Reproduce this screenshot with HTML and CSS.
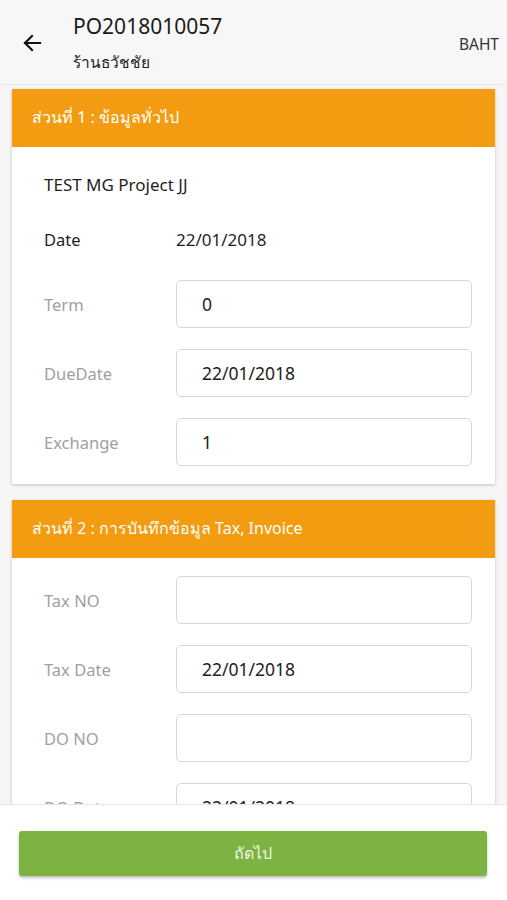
FILE: index.html
```html
<!DOCTYPE html>
<html lang="th">
<head>
<meta charset="utf-8">
<title>PO2018010057</title>
<link rel="stylesheet" href="styles.css">
</head>
<body>
<header class="topbar">
  <button class="back" aria-label="back">
    <svg width="20" height="18" viewBox="0 0 20 18"><path d="M18 9H3M10 2L3 9l7 7" fill="none" stroke="#111" stroke-width="2.2" stroke-linecap="square"/></svg>
  </button>
  <div class="titles">
    <div class="title">PO2018010057</div>
    <div class="subtitle">ร้านธวัชชัย</div>
  </div>
  <div class="currency">BAHT</div>
</header>

<main class="content">
  <section class="card">
    <div class="card-head">ส่วนที่ 1 : ข้อมูลทั่วไป</div>
    <div class="card-body first">
      <div class="project">TEST MG Project JJ</div>
      <div class="row static">
        <span class="label strong">Date</span>
        <span class="value">22/01/2018</span>
      </div>
      <div class="row">
        <span class="label">Term</span>
        <div class="input">0</div>
      </div>
      <div class="row">
        <span class="label">DueDate</span>
        <div class="input">22/01/2018</div>
      </div>
      <div class="row">
        <span class="label">Exchange</span>
        <div class="input">1</div>
      </div>
    </div>
  </section>

  <section class="card">
    <div class="card-head">ส่วนที่ 2 : การบันทึกข้อมูล Tax, Invoice</div>
    <div class="card-body">
      <div class="row">
        <span class="label">Tax NO</span>
        <div class="input"></div>
      </div>
      <div class="row">
        <span class="label">Tax Date</span>
        <div class="input">22/01/2018</div>
      </div>
      <div class="row">
        <span class="label">DO NO</span>
        <div class="input"></div>
      </div>
      <div class="row">
        <span class="label">DO Date</span>
        <div class="input">22/01/2018</div>
      </div>
      <div class="row">
        <span class="label">Invoice NO</span>
        <div class="input"></div>
      </div>
    </div>
  </section>
</main>

<footer class="bottombar">
  <button class="next">ถัดไป</button>
</footer>
</body>
</html>
```

FILE: styles.css
```css
* { box-sizing: border-box; }
html, body {
  margin: 0;
  padding: 0;
}
body {
  background: #f6f6f6;
  font-family: "Noto Sans", "DejaVu Sans", sans-serif;
  color: #222;
  height: 900px;
  overflow: hidden;
}
.topbar {
  height: 84px;
  background: #f7f7f7;
  display: flex;
  align-items: center;
  padding: 0 8px 0 22px;
  box-shadow: 0 1px 2px rgba(0,0,0,0.08);
  position: relative;
  z-index: 2;
}
.back {
  background: none;
  border: 0;
  padding: 0;
  width: 20px;
  height: 18px;
  margin-top: 2px;
  display: flex;
}
.titles {
  margin-left: 31px;
  flex: 1;
  display: flex;
  flex-direction: column;
}
.title {
  font-size: 21px;
  line-height: 26px;
  color: #1a1a1a;
  margin-top: 0;
}
.subtitle {
  font-size: 15.5px;
  line-height: 20px;
  margin-top: 13px;
  color: #222;
}
.currency {
  font-size: 15.5px;
  color: #333;
  margin-top: 3px;
}
.content {
  padding: 5px 12px 0;
  display: flex;
  flex-direction: column;
  gap: 16px;
}
.card {
  background: #fff;
  box-shadow: 0 1px 3px rgba(0,0,0,0.22);
}
.card-head {
  background: #f39c12;
  color: #fff;
  height: 58px;
  padding-left: 20px;
  display: flex;
  align-items: center;
  font-size: 16px;
  padding-bottom: 2px;
}
.card-body {
  padding: 18px 23px 18px 32px;
  display: flex;
  flex-direction: column;
  gap: 21px;
}
.card-body.first {
  padding-top: 27px;
  gap: 0;
}
.card-body.first .row { margin-top: 21px; }
.card-body.first .row.static { margin-top: 32px; height: 22px; }
.card-body.first .row.static + .row { margin-top: 30px; }
.project {
  font-size: 17px;
  line-height: 22px;
  color: #1f1f1f;
}
.row {
  display: flex;
  align-items: center;
  height: 48px;
}
.label {
  width: 132px;
  flex: none;
  font-size: 16.5px;
  color: #a0a0a0;
}
.label.strong {
  color: #1f1f1f;
}
.value {
  font-size: 17px;
  color: #1f1f1f;
}
.input {
  flex: 1;
  height: 48px;
  border: 1px solid #d8d8d8;
  border-radius: 5px;
  display: flex;
  align-items: center;
  padding-left: 25px;
  font-size: 17.5px;
  color: #222;
  background: #fff;
}
.bottombar {
  position: fixed;
  left: 0;
  right: 0;
  bottom: 0;
  height: 96px;
  background: #fff;
  border-top: 1px solid #e6e6e6;
  padding: 26px 20px 0 19px;
  z-index: 3;
}
.next {
  display: block;
  width: 100%;
  height: 45px;
  border: 0;
  border-radius: 3px;
  background: #7cb342;
  color: #eef6e6;
  font-family: inherit;
  font-size: 16px;
  box-shadow: 0 2px 3px rgba(0,0,0,0.25);
}
```
